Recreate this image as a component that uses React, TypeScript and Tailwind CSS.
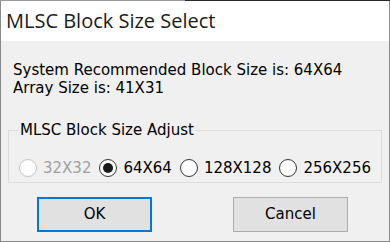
import React, { useState } from "react";

const sizes = ["32X32", "64X64", "128X128", "256X256"];

function Radio({ label, checked, disabled, onClick }: { label: string; checked: boolean; disabled?: boolean; onClick: () => void }) {
  return (
    <button
      type="button"
      onClick={disabled ? undefined : onClick}
      className={`flex items-center gap-[6px] ${disabled ? "text-[#a0a0a0]" : "text-black"}`}
    >
      <span
        className={`flex items-center justify-center w-[18px] h-[18px] rounded-full border bg-white ${
          disabled ? "border-[#c4c4c4]" : "border-[#333333]"
        }`}
      >
        {checked ? <span className="w-[10px] h-[10px] rounded-full bg-[#1a1a1a]" /> : null}
      </span>
      <span>{label}</span>
    </button>
  );
}

export default function App() {
  const [selected, setSelected] = useState<string>("64X64");

  return (
    <div className="w-[390px] h-[242px] bg-[#222]">
      <div className="flex h-px">
        <div className="w-[185px] bg-[#9a9a9a]" />
        <div className="flex-1 bg-[#2a2a2a]" />
      </div>
      <div className="h-[241px] flex flex-col border border-t-0 border-[#8a8a8a] bg-[#f0f0f0] font-['DejaVu_Sans',sans-serif]">
        <div className="h-[40px] bg-white flex items-center pl-[5px] text-[20px] text-[#1a1a1a] font-['Open_Sans',sans-serif]">
          MLSC Block Size Select
        </div>
        <div className="pt-[20px] pl-[12px] text-[15px] leading-[18px] text-black">
          <p>System Recommended Block Size is: 64X64</p>
          <p>Array Size is: 41X31</p>
        </div>
        <fieldset className="mx-[7px] mt-[24px] h-[62px] border border-[#dcdcdc] pl-[10px] pr-[6px]">
          <legend className="px-[1px] text-[15px] leading-[18px] text-black">MLSC Block Size Adjust</legend>
          <div className="flex items-center gap-[8px] text-[15px] mt-[18px]">
            {sizes.map((s) => (
              <Radio key={s} label={s} checked={selected === s} disabled={s === "32X32"} onClick={() => setSelected(s)} />
            ))}
          </div>
        </fieldset>
        <div className="flex gap-[81px] pl-[36px] mt-[14px] text-[15px] text-black">
          <button className="w-[115px] h-[35px] bg-[#e1e1e1] border-2 border-[#0078d7]">OK</button>
          <button className="w-[115px] h-[35px] bg-[#e1e1e1] border border-[#adadad]">Cancel</button>
        </div>
      </div>
    </div>
  );
}
